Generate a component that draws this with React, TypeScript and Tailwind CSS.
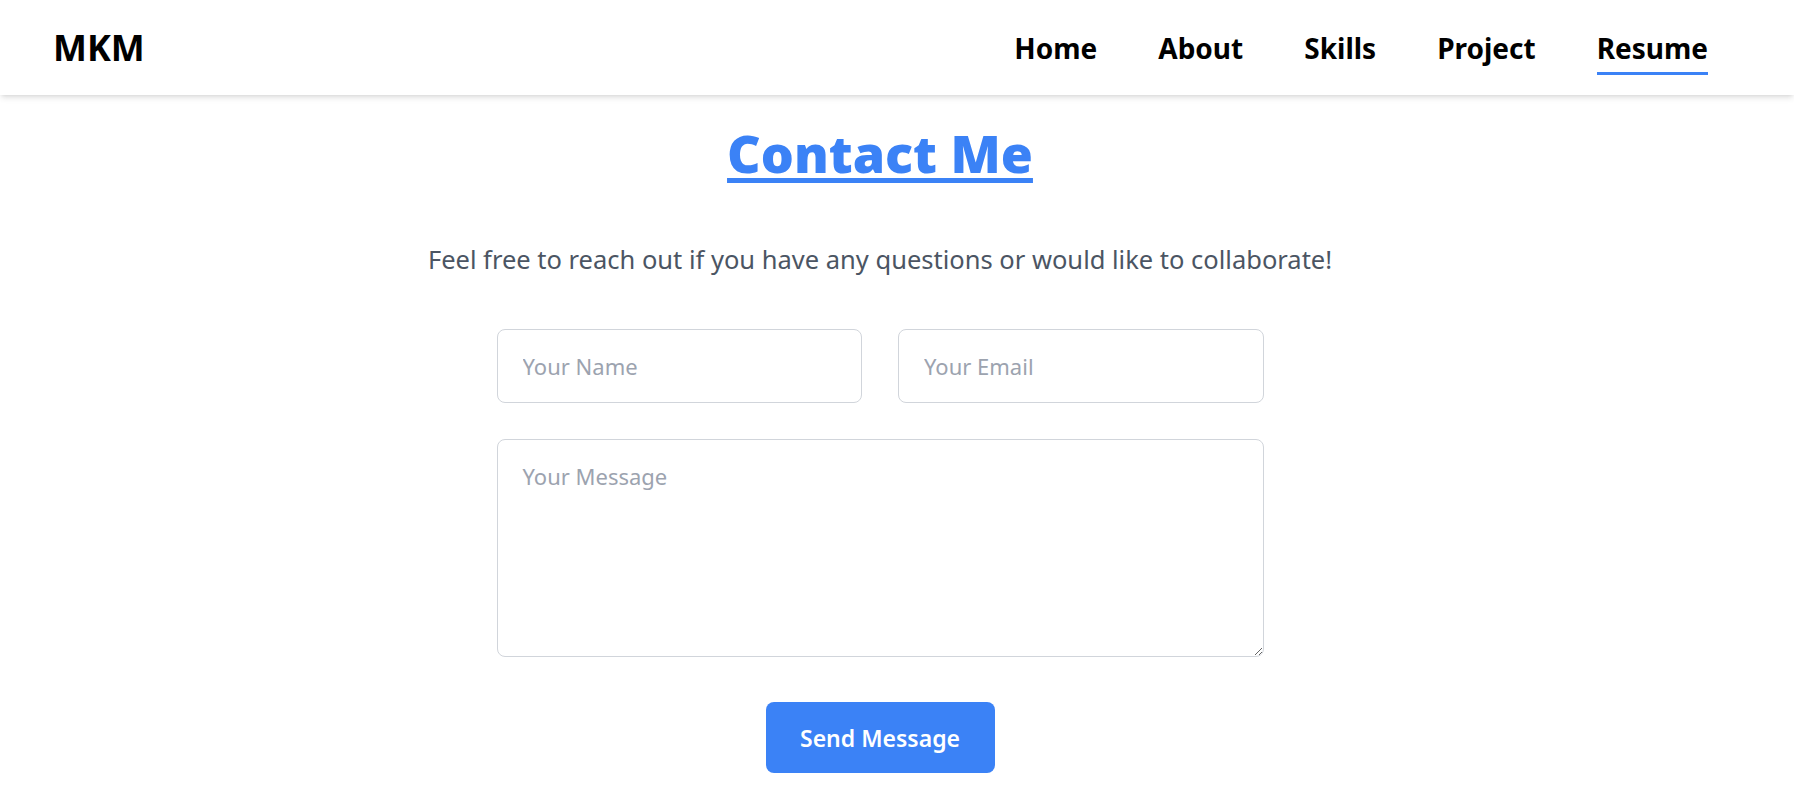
import React from "react";

export default function App() {
  const font = { fontFamily: '"Segoe UI", "Noto Sans", "Open Sans", sans-serif' };
  return (
    <div className="min-h-screen bg-white" style={font}>
      <header className="relative z-10 flex h-[95px] items-center justify-between bg-white pl-[53px] pr-[86px] shadow-md">
        <div className="text-[36px] font-bold text-black leading-none">MKM</div>
        <nav className="flex items-center gap-[61px] text-[28px] font-bold text-black leading-none">
          <a>Home</a>
          <a>About</a>
          <a>Skills</a>
          <a>Project</a>
          <a className="relative">
            Resume
            <span className="absolute left-0 right-0 top-[calc(100%+10px)] h-[3px] bg-[#3b82f6]" />
          </a>
        </nav>
      </header>
      <main className="flex flex-col items-center pr-[34px]">
        <h2 className="mt-[25px] text-[52px] font-black leading-tight text-[#3b82f6] underline decoration-[5px] underline-offset-[5px]">
          Contact Me
        </h2>
        <p className="mt-[55px] text-[25.5px] text-[#4b5563]">
          Feel free to reach out if you have any questions or would like to collaborate!
        </p>
        <form className="mt-[51px] flex w-[767px] flex-col items-center gap-[36px]">
          <div className="flex w-full gap-[36px]">
            <input
              className="h-[74px] w-0 min-w-0 flex-1 rounded-lg border border-[#d1d5db] px-[25px] text-[22px] placeholder:text-[#9ca3af] outline-none"
              placeholder="Your Name"
            />
            <input
              className="h-[74px] w-0 min-w-0 flex-1 rounded-lg border border-[#d1d5db] px-[25px] text-[22px] placeholder:text-[#9ca3af] outline-none"
              placeholder="Your Email"
            />
          </div>
          <textarea
            className="h-[218px] w-full rounded-lg border border-[#d1d5db] px-[25px] py-[20px] text-[22px] placeholder:text-[#9ca3af] outline-none"
            placeholder="Your Message"
          />
          <button
            type="button"
            className="mt-[9px] h-[71px] w-[229px] rounded-lg bg-[#3b82f6] text-[23px] font-semibold text-white"
          >
            Send Message
          </button>
        </form>
      </main>
    </div>
  );
}
